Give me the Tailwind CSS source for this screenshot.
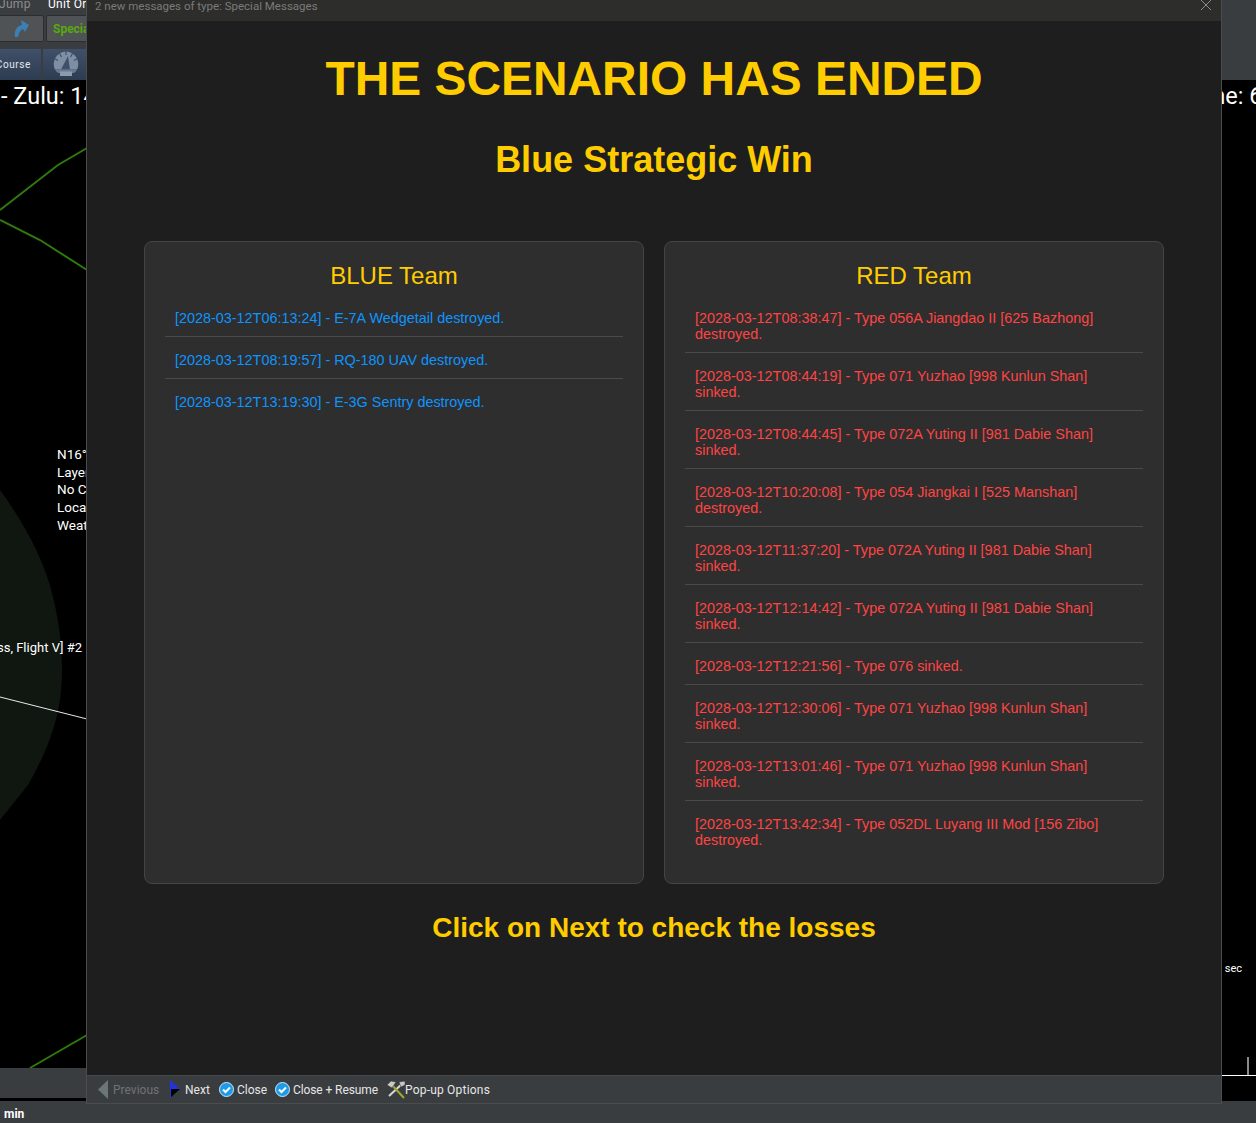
<!DOCTYPE html>
<html lang="en">
  <head>
    <meta charset="UTF-8" />
    <meta name="viewport" content="width=device-width, initial-scale=1.0" />
    <title>The Scenario Has Ended</title>
    <script src="https://cdn.jsdelivr.net/npm/@tailwindcss/browser@4"></script>
  </head>
  <body class="bg-black">
    <div class="relative w-[1256px] h-[1123px] overflow-hidden bg-black font-['Roboto',sans-serif] text-white">
      <!-- main window behind the popup -->
      <div class="flex flex-col h-full">
        <header class="h-[80px] bg-[#3a3d40] text-[12px] leading-none">
          <div class="flex h-[15px] -mt-[3px] text-[12px] leading-[15px] tracking-[0.3px]">
            <span class="w-[49px] -ml-[1px] pl-0 text-[#8a8d90]">Jump</span>
            <span class="text-white">Unit Orders</span>
          </div>
          <div class="flex gap-[2px] mt-[3px] h-[27px] -ml-[4px]">
            <div class="w-[48px] rounded-[2px] bg-[#505355] border border-[#2b2d2f] flex items-center justify-center pl-[4px]">
              <svg width="16" height="19" viewBox="0 0 16 19"><path d="M1 18 C0 11 3 7 8 6 L7 1 L15 6 L11 13 L9 10 C6 11 5 14 4 18 Z" fill="#3a7fb5" /></svg>
            </div>
            <div class="w-[60px] rounded-[2px] bg-[#505355] border border-[#2b2d2f] flex items-center pl-[6px] text-[#58a80f] font-bold text-[12px]">Special</div>
          </div>
          <div class="flex gap-[2px] mt-[7px] h-[31px]">
            <div class="w-[41px] bg-gradient-to-b from-[#40506a] to-[#2e3c50] flex items-center justify-end pr-[10px] pt-[1px] text-[10px] tracking-[0.6px] text-[#e4e8ee] overflow-hidden whitespace-nowrap">Course</div>
            <div class="w-[60px] bg-gradient-to-b from-[#40506a] to-[#2e3c50] pl-[10px] pt-[2px]">
              <svg width="26" height="26" viewBox="0 0 26 26">
                <path d="M13 0.5 A12.5 12.5 0 0 1 24 18.5 L2 18.5 A12.5 12.5 0 0 1 13 0.5 Z" fill="#7f8fa3" />
                <path d="M13 0 V4 M6.5 2.5 L8.5 6 M19.5 2.5 L17.5 6 M1.5 7.5 L5 9.5 M24.5 7.5 L21 9.5" stroke="#40506a" stroke-width="1.2" />
                <path d="M15 5 L8 18.5 H17 Z" fill="#40506a" />
                <path d="M2 18.5 H24 A12.5 12.5 0 0 1 21 22 H5 A12.5 12.5 0 0 1 2 18.5 Z" fill="#687a90" />
                <rect x="7" y="20.5" width="12" height="4.5" fill="#8d9bad" />
              </svg>
            </div>
          </div>
        </header>
        <main class="relative flex-1 bg-black">
          <svg class="absolute inset-0" width="1256" height="1043" viewBox="0 80 1256 1043">
            <path d="M0 490 C22 520 45 560 53 597 C60 625 64 660 61 690 C58 725 45 755 28 785 L0 820 Z" fill="#0f1710" />
            <path d="M0 210 L58 165 L87 148 M0 220 L40 240 L87 270 M30 1068 L87 1035" stroke="#2f7a0c" stroke-width="2" fill="none" />
            <path d="M0 697 L87 719" stroke="#e8e8e8" stroke-width="1" fill="none" />
            <path d="M1221 1075.5 L1256 1075.5" stroke="#ffffff" stroke-width="1" />
            <path d="M1248 1057 L1248 1075" stroke="#8a8a8a" stroke-width="2" />
          </svg>
          <div class="absolute left-[1px] top-[1px] text-[23.5px] leading-[30px] whitespace-nowrap">- Zulu: 14:00</div>
          <div class="absolute left-[1185px] top-[1px] text-[23.5px] leading-[30px] whitespace-nowrap">Time: 6</div>
          <div class="absolute left-[57px] top-[366px] text-[13.5px] leading-[17.7px] whitespace-nowrap">
            <p>N16°</p>
            <p>Layer</p>
            <p>No Contact</p>
            <p>Local</p>
            <p>Weather</p>
          </div>
          <div class="absolute right-[1174px] top-[559px] text-[13px] leading-[18px] whitespace-nowrap">[Class, Flight V] #2</div>
          <div class="absolute right-[14px] top-[881px] text-[11px] leading-[16px] whitespace-nowrap">13 sec</div>
          <div class="absolute left-0 right-[1169px] top-[988px] h-[30px] bg-[#3a3d40]"></div>
        </main>
        <footer class="h-[22px] bg-[#3a3d40] pl-[4px] pt-[3px] text-[12px] leading-[20px] font-bold">min</footer>
      </div>

      <!-- popup -->
      <section class="absolute left-[86px] top-0 w-[1136px] h-[1104px] flex flex-col border-x border-b border-[#4a4c4e] bg-[#1e1e1e]">
        <div class="relative h-[21px] shrink-0 bg-[#2d2d2c] pl-[8px] text-[11.5px] leading-[12px] text-[#7b7b7b] whitespace-nowrap">
          2 new messages of type: Special Messages
          <svg class="absolute right-[9px] top-0" width="12" height="11" viewBox="0 0 12 11"><path d="M1 0 L11 10 M11 0 L1 10" stroke="#8c8c8c" stroke-width="1" /></svg>
        </div>
        <div class="flex-1 flex flex-col items-center font-['Liberation_Sans',sans-serif] text-[#ffcc00]">
          <h1 class="mt-[30px] text-[47.9px] leading-[55px] font-bold">THE SCENARIO HAS ENDED</h1>
          <h2 class="mt-[33px] text-[36px] leading-[41px] font-bold">Blue Strategic Win</h2>
          <div class="mt-[61px] flex gap-[20px]">
            <div class="w-[500px] h-[643px] rounded-[8px] border border-[#444] bg-[#2e2e2e] px-[20px] pt-[20px]">
              <h3 class="text-center text-[24px] leading-[28px]">BLUE Team</h3>
              <ul class="mt-[5px] text-[14.4px] leading-[16px] text-[#0d95ff] divide-y divide-[#4a4a4a]">
                <li class="pt-[15px] pb-[10px] px-[10px]">[2028-03-12T06:13:24] - E-7A Wedgetail destroyed.</li>
                <li class="pt-[15px] pb-[10px] px-[10px]">[2028-03-12T08:19:57] - RQ-180 UAV destroyed.</li>
                <li class="pt-[15px] pb-[10px] px-[10px]">[2028-03-12T13:19:30] - E-3G Sentry destroyed.</li>
              </ul>
            </div>
            <div class="w-[500px] h-[643px] rounded-[8px] border border-[#444] bg-[#2e2e2e] px-[20px] pt-[20px]">
              <h3 class="text-center text-[24px] leading-[28px]">RED Team</h3>
              <ul class="mt-[5px] text-[14.4px] leading-[16px] text-[#ff4444] divide-y divide-[#4a4a4a]">
                <li class="pt-[15px] pb-[10px] px-[10px]">[2028-03-12T08:38:47] - Type 056A Jiangdao II [625 Bazhong] destroyed.</li>
                <li class="pt-[15px] pb-[10px] px-[10px]">[2028-03-12T08:44:19] - Type 071 Yuzhao [998 Kunlun Shan] sinked.</li>
                <li class="pt-[15px] pb-[10px] px-[10px]">[2028-03-12T08:44:45] - Type 072A Yuting II [981 Dabie Shan] sinked.</li>
                <li class="pt-[15px] pb-[10px] px-[10px]">[2028-03-12T10:20:08] - Type 054 Jiangkai I [525 Manshan] destroyed.</li>
                <li class="pt-[15px] pb-[10px] px-[10px]">[2028-03-12T11:37:20] - Type 072A Yuting II [981 Dabie Shan] sinked.</li>
                <li class="pt-[15px] pb-[10px] px-[10px]">[2028-03-12T12:14:42] - Type 072A Yuting II [981 Dabie Shan] sinked.</li>
                <li class="pt-[15px] pb-[10px] px-[10px]">[2028-03-12T12:21:56] - Type 076 sinked.</li>
                <li class="pt-[15px] pb-[10px] px-[10px]">[2028-03-12T12:30:06] - Type 071 Yuzhao [998 Kunlun Shan] sinked.</li>
                <li class="pt-[15px] pb-[10px] px-[10px]">[2028-03-12T13:01:46] - Type 071 Yuzhao [998 Kunlun Shan] sinked.</li>
                <li class="pt-[15px] pb-[10px] px-[10px]">[2028-03-12T13:42:34] - Type 052DL Luyang III Mod [156 Zibo] destroyed.</li>
              </ul>
            </div>
          </div>
          <p class="mt-[28px] text-[28px] leading-[32px] font-bold">Click on Next to check the losses</p>
        </div>
        <div class="h-[28px] shrink-0 bg-[#3a3d40] border-t border-[#45484b] flex items-center pl-[11px] text-[12px] text-[#e6e6e6] whitespace-nowrap">
          <svg width="11" height="19" viewBox="0 0 11 19"><path d="M10 0 L0 9.5 L10 19 Z" fill="#6b7675" /></svg>
          <span class="ml-[4px] w-[57px] text-[#6f7275]">Previous</span>
          <svg width="11" height="19" viewBox="0 0 11 19"><path d="M0 0 L10 9 L0 9 Z" fill="#2233dd" /><path d="M0 9 L10 9 L0 18 Z" fill="#000" /><path d="M0.5 0 L0.5 18" stroke="#2233dd" stroke-width="1" /></svg>
          <span class="ml-[4px] w-[34px]">Next</span>
          <svg width="15" height="15" viewBox="0 0 15 15"><circle cx="7.5" cy="7.5" r="7" fill="#1e9be8" stroke="#cfe6f5" stroke-width="1" /><path d="M4 7.5 L6.5 10 L11 5.5" stroke="#fff" stroke-width="2" fill="none" /></svg>
          <span class="ml-[3px] w-[38px]">Close</span>
          <svg width="15" height="15" viewBox="0 0 15 15"><circle cx="7.5" cy="7.5" r="7" fill="#1e9be8" stroke="#cfe6f5" stroke-width="1" /><path d="M4 7.5 L6.5 10 L11 5.5" stroke="#fff" stroke-width="2" fill="none" /></svg>
          <span class="ml-[3px] w-[94px] tracking-[-0.1px]">Close + Resume</span>
          <svg width="18" height="19" viewBox="0 0 18 19"><path d="M16 3 L2 16" stroke="#d8d8d8" stroke-width="2" /><path d="M4 4 L17 18" stroke="#a3a82c" stroke-width="2" /><path d="M0 5 L4 1 L9 2 L5 8 Z" fill="#c8c8c8" stroke="#2a2a2a" stroke-width="0.5" /><path d="M12 2 L18 1 L18 5 L14 7 Z" fill="#c8c8c8" stroke="#2a2a2a" stroke-width="0.5" /></svg>
          <span class="tracking-[0.2px]">Pop-up Options</span>
        </div>
      </section>
    </div>
  </body>
</html>
